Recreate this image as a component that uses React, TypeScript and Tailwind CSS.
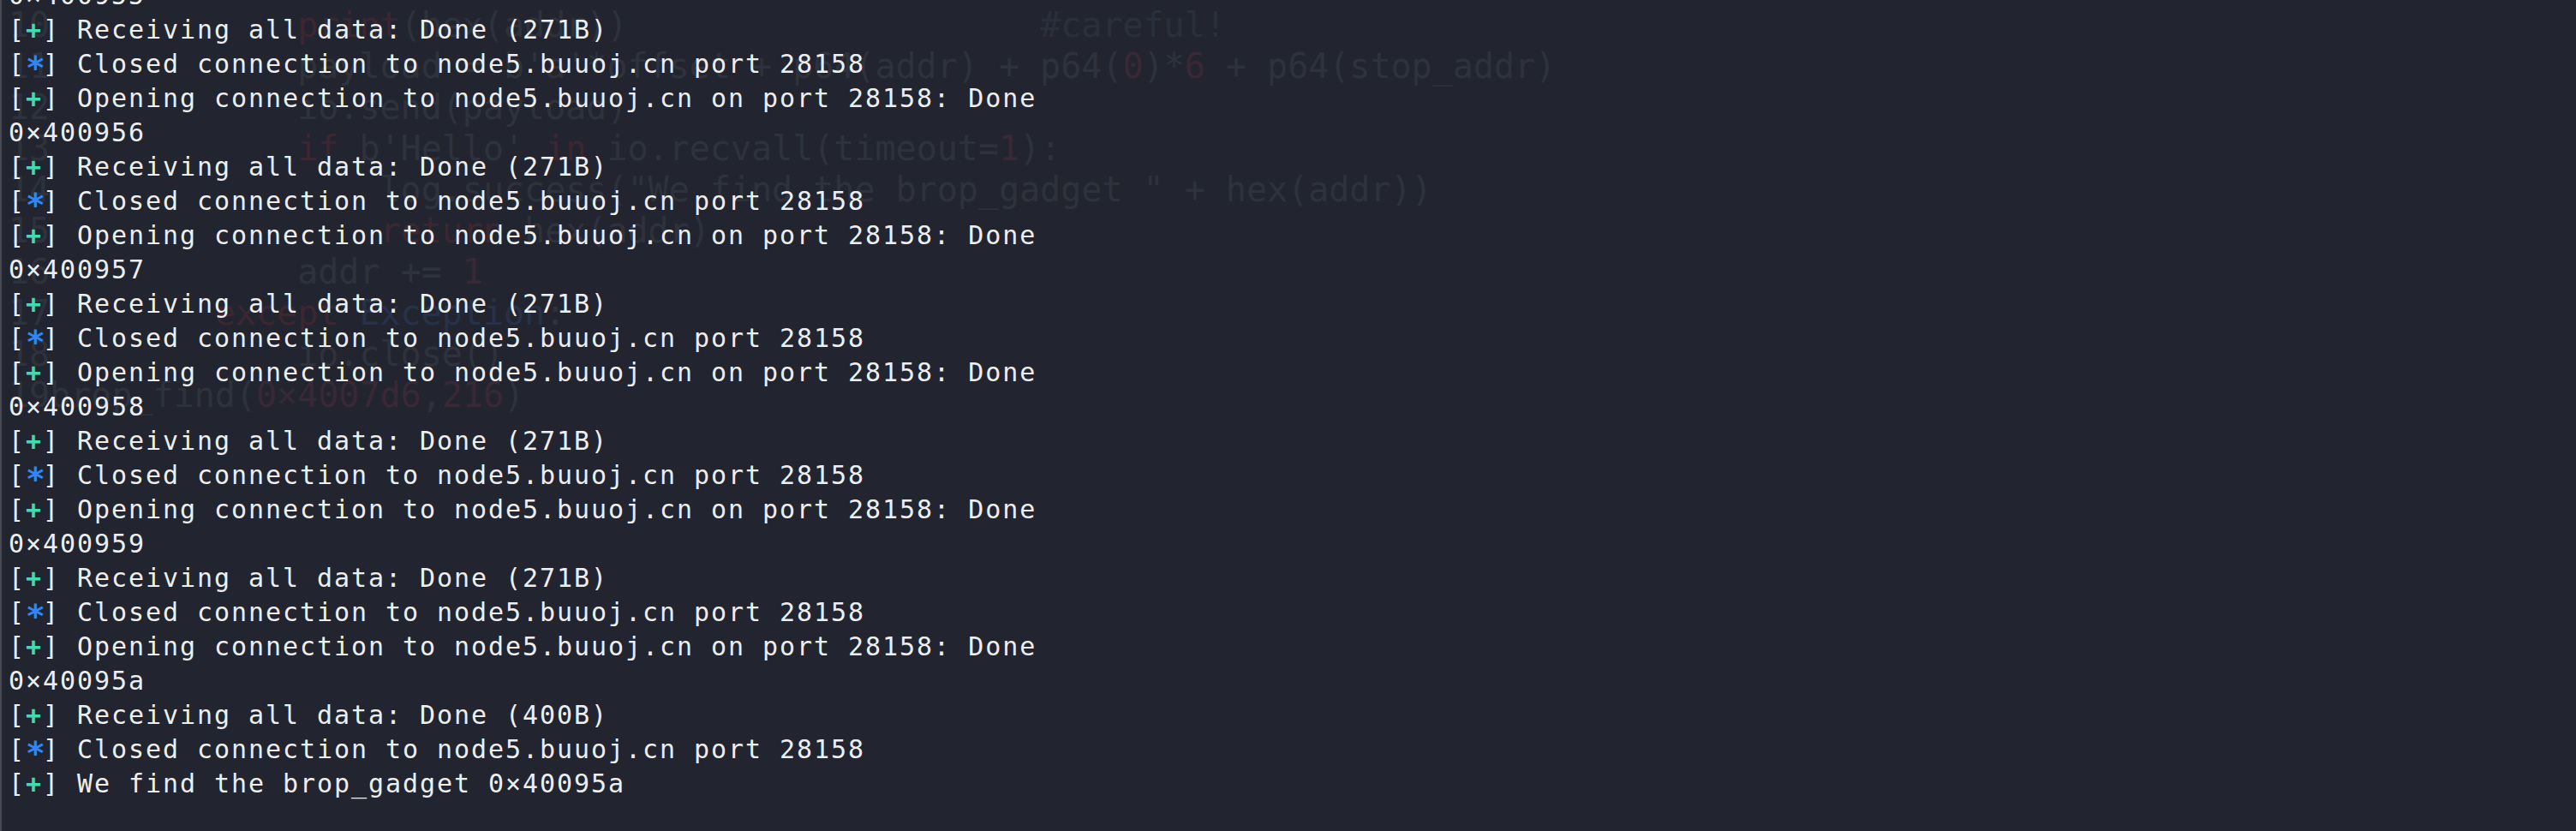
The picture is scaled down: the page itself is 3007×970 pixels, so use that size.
import React from "react";

type Row = { kind: "plus" | "star" | "plain"; text: string };

const HOST = "node5.buuoj.cn";
const PORT = "28158";

const buildRows = (): Row[] => {
  const rows: Row[] = [{ kind: "plain", text: "0×400955" }];
  ["956", "957", "958", "959", "95a"].forEach((a) => {
    rows.push({ kind: "plus", text: "Receiving all data: Done (271B)" });
    rows.push({ kind: "star", text: `Closed connection to ${HOST} port ${PORT}` });
    rows.push({ kind: "plus", text: `Opening connection to ${HOST} on port ${PORT}: Done` });
    rows.push({ kind: "plain", text: "0×400" + a });
  });
  rows.push({ kind: "plus", text: "Receiving all data: Done (400B)" });
  rows.push({ kind: "star", text: `Closed connection to ${HOST} port ${PORT}` });
  rows.push({ kind: "plus", text: "We find the brop_gadget 0×40095a" });
  return rows;
};

// faint editor text showing through the terminal
type Seg = [string, "d" | "r" | "n" | "b" | "c"];
const ghost: Seg[][] = [
  [["10", "d"], ["            ", "d"], ["print", "r"], ["(hex(addr))", "d"], ["                    ", "d"], ["#careful!", "c"]],
  [["11", "d"], ["            payload = b'a'*offset + p64(addr) + p64(", "d"], ["0", "n"], [")*", "d"], ["6", "n"], [" + p64(stop_addr)", "d"]],
  [["12", "d"], ["            io.send(payload)", "d"]],
  [["13", "d"], ["            ", "d"], ["if", "r"], [" b'Hello' ", "d"], ["in", "r"], [" io.recvall(timeout=", "d"], ["1", "n"], ["):", "d"]],
  [["14", "d"], ['                log.success("We find the brop_gadget " + hex(addr))', "d"]],
  [["15", "d"], ["                ", "d"], ["return", "r"], [" hex(addr)", "d"]],
  [["16", "d"], ["            addr += ", "d"], ["1", "n"]],
  [["17", "d"], ["        ", "d"], ["except", "r"], [" ", "d"], ["Exception", "b"], [":", "d"]],
  [["18", "d"], ["            io.close()", "d"]],
  [["19", "d"], ["brop_find(", "d"], ["0×4007d6", "n"], [",", "d"], ["216", "n"], [")", "d"]],
];

const segColor = {
  d: "text-[#2e323c]",
  r: "text-[#3c2630]",
  n: "text-[#392835]",
  b: "text-[#273249]",
  c: "text-[#2a2f3c]",
};

const App = () => {
  const rows = buildRows();
  return (
    <div className="relative h-[970px] w-[3007px] overflow-hidden border-l-2 border-[#474a52] bg-[#22252f]">
      <div className="pointer-events-none absolute left-[8px] top-[5px] whitespace-pre font-['DejaVu_Sans_Mono',monospace] text-[40px] leading-[48px]">
        {ghost.map((line, i) => (
          <div key={i}>
            {line.map(([t, c], j) => (
              <span key={j} className={segColor[c]}>
                {t}
              </span>
            ))}
          </div>
        ))}
      </div>
      <div className="relative -mt-[25px] whitespace-pre pl-[8px] font-['DejaVu_Sans_Mono',monospace] text-[30px] leading-[40px] tracking-[1.94px] text-[#eeeeee]">
        {rows.map((row, i) =>
          row.kind === "plain" ? (
            <div key={i} className="h-[40px]">
              {row.text}
            </div>
          ) : (
            <div key={i} className="h-[40px]">
              [
              {row.kind === "plus" ? (
                <span className="font-bold text-[#45d7b8]">+</span>
              ) : (
                <span className="relative top-[4px] inline-block h-[40px] w-[20px] align-top text-center text-[38px] leading-[40px] font-bold tracking-normal text-[#2f87f5]">
                  *
                </span>
              )}
              ] {row.text}
            </div>
          )
        )}
      </div>
    </div>
  );
};

export default App;
